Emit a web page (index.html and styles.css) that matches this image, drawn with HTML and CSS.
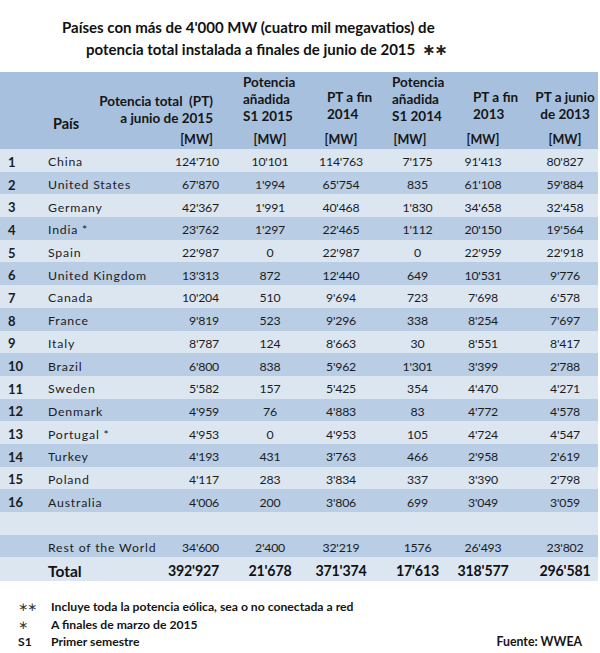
FILE: index.html
```html
<!DOCTYPE html>
<html lang="es">
<head>
<meta charset="utf-8">
<title>Países con más de 4'000 MW</title>
<link rel="stylesheet" href="styles.css">
</head>
<body>
<div class="page">
  <div class="title">
    <div class="t1">Países con más de 4'000 MW (cuatro mil megavatios) de</div>
    <div class="t2">potencia total instalada a finales de junio de 2015 <span class="tstar">∗∗</span></div>
  </div>

  <div class="tbl">
    <div class="head">
      <div class="h-pais">País</div>
      <div class="h-c2">Potencia total &nbsp;(PT)<br>a junio de 2015</div>
      <div class="h-c3">Potencia<br>añadida<br>S1 2015</div>
      <div class="h-c4">PT a fin<br>2014</div>
      <div class="h-c5">Potencia<br>añadida<br>S1 2014</div>
      <div class="h-c6">PT a fin<br>2013</div>
      <div class="h-c7">PT a junio<br>de 2013</div>
      <div class="mw m2">[MW]</div>
      <div class="mw m3">[MW]</div>
      <div class="mw m4">[MW]</div>
      <div class="mw m5">[MW]</div>
      <div class="mw m6">[MW]</div>
      <div class="mw m7">[MW]</div>
    </div>

    <div class="row light"><div class="rk">1</div><div class="ct">China</div><div class="v2">124'710</div><div class="v3">10'101</div><div class="v4">114'763</div><div class="v5">7'175</div><div class="v6">91'413</div><div class="v7">80'827</div></div>
    <div class="row dark"><div class="rk">2</div><div class="ct">United States</div><div class="v2">67'870</div><div class="v3">1'994</div><div class="v4">65'754</div><div class="v5">835</div><div class="v6">61'108</div><div class="v7">59'884</div></div>
    <div class="row light"><div class="rk">3</div><div class="ct">Germany</div><div class="v2">42'367</div><div class="v3">1'991</div><div class="v4">40'468</div><div class="v5">1'830</div><div class="v6">34'658</div><div class="v7">32'458</div></div>
    <div class="row dark"><div class="rk">4</div><div class="ct">India *</div><div class="v2">23'762</div><div class="v3">1'297</div><div class="v4">22'465</div><div class="v5">1'112</div><div class="v6">20'150</div><div class="v7">19'564</div></div>
    <div class="row light"><div class="rk">5</div><div class="ct">Spain</div><div class="v2">22'987</div><div class="v3">0</div><div class="v4">22'987</div><div class="v5">0</div><div class="v6">22'959</div><div class="v7">22'918</div></div>
    <div class="row dark"><div class="rk">6</div><div class="ct">United Kingdom</div><div class="v2">13'313</div><div class="v3">872</div><div class="v4">12'440</div><div class="v5">649</div><div class="v6">10'531</div><div class="v7">9'776</div></div>
    <div class="row light"><div class="rk">7</div><div class="ct">Canada</div><div class="v2">10'204</div><div class="v3">510</div><div class="v4">9'694</div><div class="v5">723</div><div class="v6">7'698</div><div class="v7">6'578</div></div>
    <div class="row dark"><div class="rk">8</div><div class="ct">France</div><div class="v2">9'819</div><div class="v3">523</div><div class="v4">9'296</div><div class="v5">338</div><div class="v6">8'254</div><div class="v7">7'697</div></div>
    <div class="row light"><div class="rk">9</div><div class="ct">Italy</div><div class="v2">8'787</div><div class="v3">124</div><div class="v4">8'663</div><div class="v5">30</div><div class="v6">8'551</div><div class="v7">8'417</div></div>
    <div class="row dark"><div class="rk">10</div><div class="ct">Brazil</div><div class="v2">6'800</div><div class="v3">838</div><div class="v4">5'962</div><div class="v5">1'301</div><div class="v6">3'399</div><div class="v7">2'788</div></div>
    <div class="row light"><div class="rk">11</div><div class="ct">Sweden</div><div class="v2">5'582</div><div class="v3">157</div><div class="v4">5'425</div><div class="v5">354</div><div class="v6">4'470</div><div class="v7">4'271</div></div>
    <div class="row dark"><div class="rk">12</div><div class="ct">Denmark</div><div class="v2">4'959</div><div class="v3">76</div><div class="v4">4'883</div><div class="v5">83</div><div class="v6">4'772</div><div class="v7">4'578</div></div>
    <div class="row light"><div class="rk">13</div><div class="ct">Portugal *</div><div class="v2">4'953</div><div class="v3">0</div><div class="v4">4'953</div><div class="v5">105</div><div class="v6">4'724</div><div class="v7">4'547</div></div>
    <div class="row dark"><div class="rk">14</div><div class="ct">Turkey</div><div class="v2">4'193</div><div class="v3">431</div><div class="v4">3'763</div><div class="v5">466</div><div class="v6">2'958</div><div class="v7">2'619</div></div>
    <div class="row light"><div class="rk">15</div><div class="ct">Poland</div><div class="v2">4'117</div><div class="v3">283</div><div class="v4">3'834</div><div class="v5">337</div><div class="v6">3'390</div><div class="v7">2'798</div></div>
    <div class="row dark"><div class="rk">16</div><div class="ct">Australia</div><div class="v2">4'006</div><div class="v3">200</div><div class="v4">3'806</div><div class="v5">699</div><div class="v6">3'049</div><div class="v7">3'059</div></div>
    <div class="row light"></div>
    <div class="row dark"><div class="rk"></div><div class="ct">Rest of the World</div><div class="v2">34'600</div><div class="v3">2'400</div><div class="v4">32'219</div><div class="v5">1576</div><div class="v6">26'493</div><div class="v7">23'802</div></div>
    <div class="row light total"><div class="rk"></div><div class="ct">Total</div><div class="v2">392'927</div><div class="v3">21'678</div><div class="v4">371'374</div><div class="v5">17'613</div><div class="v6">318'577</div><div class="v7">296'581</div></div>
  </div>

  <div class="notes">
    <div class="note"><span class="mk star">∗∗</span><span>Incluye toda la potencia eólica, sea o no conectada a red</span></div>
    <div class="note"><span class="mk star">∗</span><span>A finales de marzo de 2015</span></div>
    <div class="note"><span class="mk">S1</span><span class="grow">Primer semestre</span><span class="src">Fuente: WWEA</span></div>
  </div>
</div>
</body>
</html>
```

FILE: styles.css
```css
html, body {
  margin: 0;
  padding: 0;
  background: #ffffff;
}

body {
  font-family: Lato, "Open Sans", sans-serif;
  color: #151515;
}

.page {
  width: 600px;
}

.title {
  padding-top: 16px;
  margin-bottom: 12px;
  font-weight: 700;
  font-size: 15px;
  line-height: 22px;
  color: #111;
}

.t1 { padding-left: 62px; white-space: nowrap; height: 22px; }
.t2 { padding-left: 86px; white-space: nowrap; height: 22px; }

.tstar {
  font-family: "DejaVu Sans", sans-serif;
  font-size: 16px;
  line-height: 0;
  margin-left: 3px;
  letter-spacing: -1px;
  color: #222;
}

.tbl {
  width: 598px;
}

.head {
  display: grid;
  grid-template-columns: 40px 120px 70px 80px 70px 75px 65px 78px;
  grid-template-rows: 58px 19px;
  background: #a7c0dd;
  font-weight: 700;
  font-size: 13.5px;
  line-height: 17px;
  color: #151515;
}

.head > div { white-space: nowrap; }

.h-pais { grid-column: 2 / 3; grid-row: 1; padding-left: 13px; padding-top: 43px; font-size: 14.5px; }
.h-c2 { grid-column: 2 / 4; grid-row: 1; text-align: right; padding-right: 17px; padding-top: 21px; }
.h-c3 { grid-column: 4; grid-row: 1; padding-left: 13px; padding-top: 2px; }
.h-c4 { grid-column: 5; grid-row: 1; padding-left: 17px; padding-top: 17px; }
.h-c5 { grid-column: 6; grid-row: 1; padding-left: 12px; padding-top: 2px; }
.h-c6 { grid-column: 7; grid-row: 1; padding-left: 18px; padding-top: 17px; }
.h-c7 { grid-column: 8; grid-row: 1; text-align: center; padding-left: 12px; padding-top: 17px; }

.mw { grid-row: 2; font-size: 12.5px; line-height: 19px; text-align: center; }
.m2 { grid-column: 3; text-align: right; padding-right: 17px; }
.m3 { grid-column: 4; }
.m4 { grid-column: 5; padding-right: 8px; }
.m5 { grid-column: 6; padding-right: 15px; }
.m6 { grid-column: 7; padding-right: 9px; }
.m7 { grid-column: 8; padding-left: 12px; }

.row {
  display: grid;
  grid-template-columns: 40px 120px 70px 80px 70px 75px 65px 78px;
  box-sizing: border-box;
  height: 22.7px;
  padding-top: 3px;
  align-items: center;
  font-size: 12.3px;
  color: #1c1c1c;
}

.light { background: #dce6f1; }
.dark { background: #b9cde5; }

.rk { padding-left: 8px; font-weight: 700; font-size: 13px; }
.ct { padding-left: 8px; letter-spacing: 0.8px; white-space: nowrap; }
.v2 { text-align: right; padding-right: 11px; letter-spacing: -0.2px; }
.v3 { text-align: center; letter-spacing: -0.2px; }
.v4 { text-align: center; padding-right: 8px; letter-spacing: -0.2px; }
.v5 { text-align: center; letter-spacing: -0.2px; }
.v6 { text-align: center; padding-right: 9px; letter-spacing: -0.2px; }
.v7 { text-align: center; padding-left: 12px; letter-spacing: -0.2px; }

.row.total {
  height: 24px;
  font-weight: 700;
  font-size: 14.2px;
  color: #111;
}

.row.total .ct { letter-spacing: 0; font-size: 15.5px; }

.notes {
  margin-top: 17px;
  font-weight: 700;
  font-size: 12.2px;
  line-height: 17.5px;
  color: #151515;
}

.note {
  display: flex;
  align-items: baseline;
  height: 17.5px;
  padding-left: 18px;
  padding-right: 18px;
}

.mk {
  width: 33px;
  flex: none;
}

.star {
  font-family: "DejaVu Sans", sans-serif;
  font-weight: 400;
  font-size: 12px;
  line-height: 17.5px;
  color: #333;
  letter-spacing: -1px;
}

.grow { flex: 1; }

.src { font-size: 12.3px; }
```
